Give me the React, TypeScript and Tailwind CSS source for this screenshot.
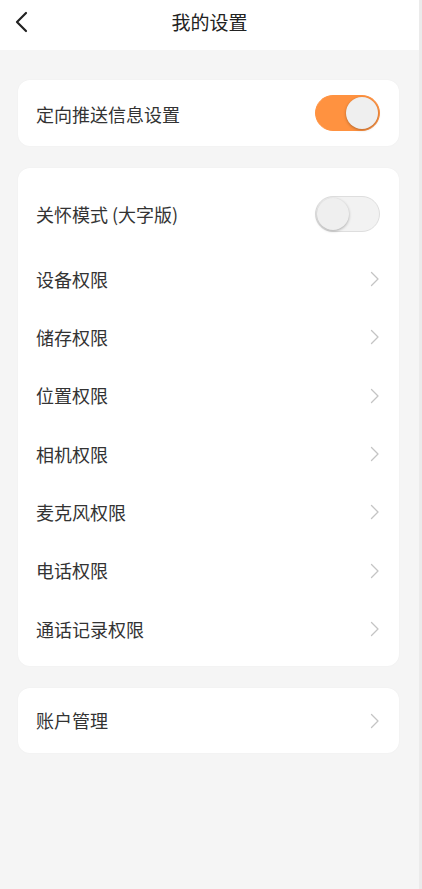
import React, { useState } from 'react';

const FONT = { fontFamily: '"Noto Sans CJK SC", "Noto Sans", sans-serif' };

const PERMS = ['设备权限', '储存权限', '位置权限', '相机权限', '麦克风权限', '电话权限', '通话记录权限'];

function Toggle({ on, onClick }: { on: boolean; onClick: () => void }) {
  return (
    <button
      onClick={onClick}
      className={`relative w-[65px] h-[36px] rounded-full border ${on ? 'bg-[#ff9240] border-[#ff9240]' : 'bg-[#f2f2f2] border-[#dedede]'}`}
    >
      <span
        className={`absolute top-[1px] w-[32px] h-[32px] rounded-full bg-[#efefef] shadow-[0_1px_3px_rgba(0,0,0,0.3)] ${on ? 'right-[1px]' : 'left-[1px]'}`}
      />
    </button>
  );
}

function Chevron() {
  return (
    <svg width="10" height="16" viewBox="0 0 10 16" fill="none" className="shrink-0">
      <path d="M1.5 1.5 8 8l-6.5 6.5" stroke="#c4c4c4" strokeWidth="1.3" strokeLinecap="round" strokeLinejoin="round" />
    </svg>
  );
}

export default function App() {
  const [push, setPush] = useState(true);
  const [care, setCare] = useState(false);

  return (
    <div className="w-[422px] h-[889px] bg-[#f5f5f5] text-[#333] flex flex-col border-r-[3px] border-[#ebebeb]" style={FONT}>
      {/* Header */}
      <div className="h-[50px] bg-white relative flex items-center justify-center shrink-0">
        <button className="absolute left-[14px] top-[11px]">
          <svg width="18" height="22" viewBox="0 0 18 22" fill="none">
            <path d="M12 2 3 11l9 9" stroke="#222" strokeWidth="2.2" strokeLinecap="round" strokeLinejoin="round" />
          </svg>
        </button>
        <h1 className="text-[19px] text-[#222] -mt-[6px]">我的设置</h1>
      </div>

      <div className="pl-[18px] pr-[20px] pt-[30px] flex flex-col gap-[22px]">
        <div className="bg-white rounded-[12px] h-[66px] pl-[18px] pr-[19px] flex items-center justify-between shadow-[0_0_2px_rgba(0,0,0,0.04)]">
          <span className="text-[18px] mt-[3px]">定向推送信息设置</span>
          <Toggle on={push} onClick={() => setPush(!push)} />
        </div>

        <div className="bg-white rounded-[12px] pt-[17px] pb-[8px] shadow-[0_0_2px_rgba(0,0,0,0.04)]">
          <div className="h-[58px] mb-[7px] pl-[18px] pr-[19px] flex items-center justify-between">
            <span className="text-[18px]">关怀模式 (大字版)</span>
            <Toggle on={care} onClick={() => setCare(!care)} />
          </div>
          {PERMS.map((p) => (
            <div key={p} className="h-[58.33px] pl-[18px] pr-[19px] flex items-center justify-between">
              <span className="text-[18px]">{p}</span>
              <Chevron />
            </div>
          ))}
        </div>

        <div className="bg-white rounded-[12px] h-[65px] pl-[18px] pr-[19px] flex items-center justify-between shadow-[0_0_2px_rgba(0,0,0,0.04)]">
          <span className="text-[18px]">账户管理</span>
          <Chevron />
        </div>
      </div>
    </div>
  );
}
